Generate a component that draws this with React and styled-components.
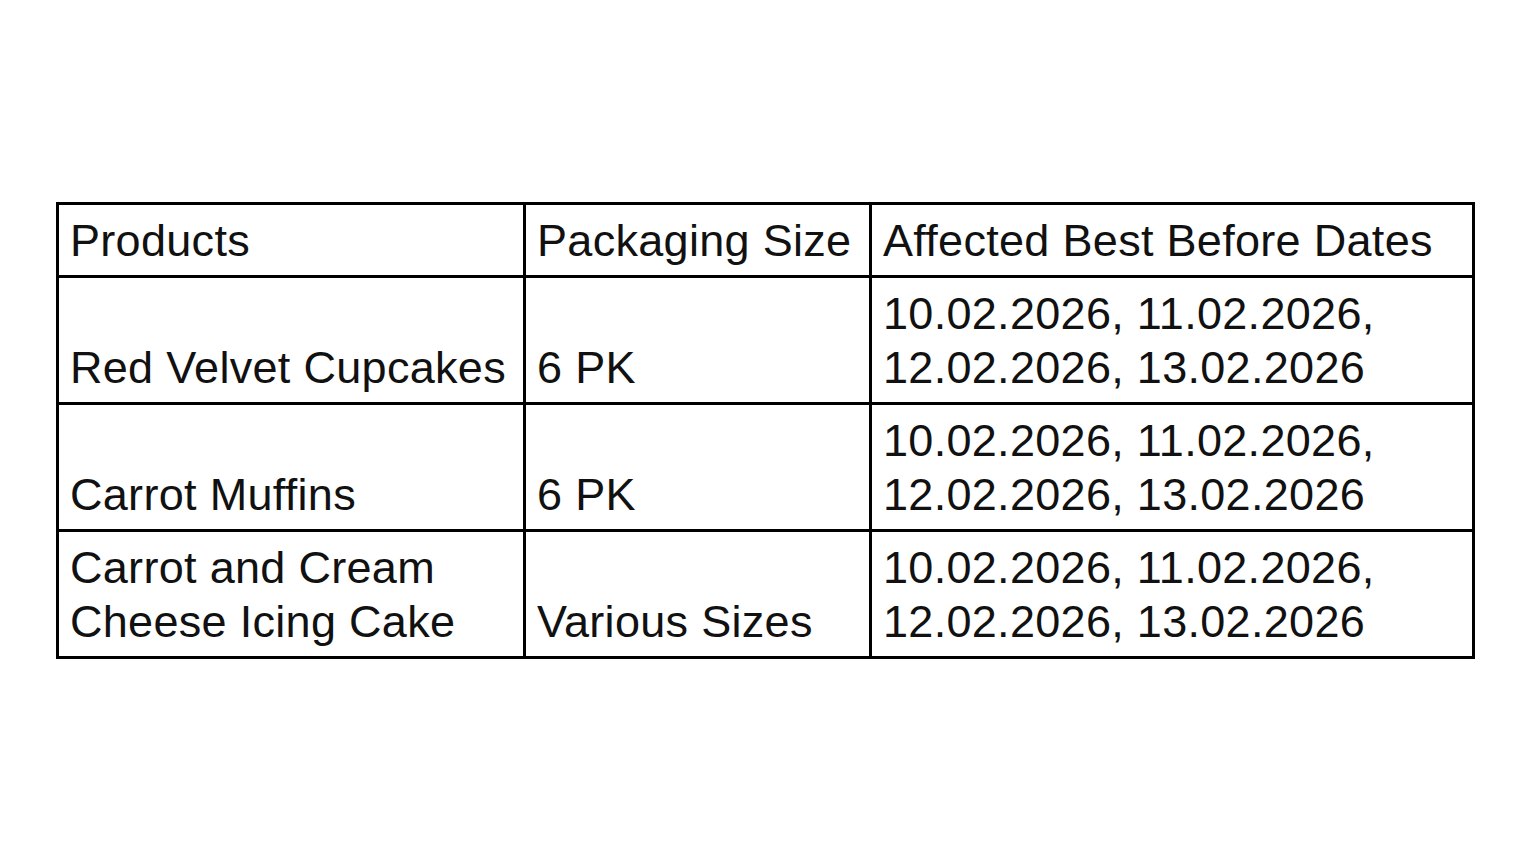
import React from "react";
import styled, { createGlobalStyle } from "styled-components";

const GlobalStyle = createGlobalStyle`
  html, body {
    margin: 0;
    padding: 0;
    background: #fff;
  }
  body {
    font-family: "Liberation Sans", Arial, sans-serif;
    color: #111;
  }
`;

const Page = styled.div`
  min-height: 100vh;
  display: flex;
  align-items: center;
  justify-content: center;
`;

const Table = styled.table`
  border-collapse: collapse;
  width: 1416px;
  table-layout: fixed;
  font-size: 45px;
  line-height: 54px;
  letter-spacing: 0.3px;
`;

const Col = styled.col`
  width: ${(p) => p.$w}px;
`;

const Cell = styled.td`
  border: 3px solid #000;
  padding: 8.5px 10px 7.5px 11px;
  vertical-align: bottom;
  text-align: left;
  font-weight: normal;
`;

const HeadCell = styled(Cell).attrs({ as: "th" })``;

const Line = styled.div`
  white-space: nowrap;
`;

const dates = ["10.02.2026, 11.02.2026,", "12.02.2026, 13.02.2026"];

const rows = [
  { product: ["Red Velvet Cupcakes"], size: "6 PK" },
  { product: ["Carrot Muffins"], size: "6 PK" },
  { product: ["Carrot and Cream", "Cheese Icing Cake"], size: "Various Sizes" },
];

const App = () => {
  return (
    <>
      <GlobalStyle />
      <Page>
        <Table>
          <colgroup>
            <Col $w={467} />
            <Col $w={346} />
            <Col $w={603} />
          </colgroup>
          <thead>
            <tr>
              <HeadCell>Products</HeadCell>
              <HeadCell>Packaging Size</HeadCell>
              <HeadCell>Affected Best Before Dates</HeadCell>
            </tr>
          </thead>
          <tbody>
            {rows.map((r, i) => (
              <tr key={i}>
                <Cell>
                  {r.product.map((t) => (
                    <Line key={t}>{t}</Line>
                  ))}
                </Cell>
                <Cell>{r.size}</Cell>
                <Cell>
                  {dates.map((d) => (
                    <Line key={d}>{d}</Line>
                  ))}
                </Cell>
              </tr>
            ))}
          </tbody>
        </Table>
      </Page>
    </>
  );
};

export default App;
